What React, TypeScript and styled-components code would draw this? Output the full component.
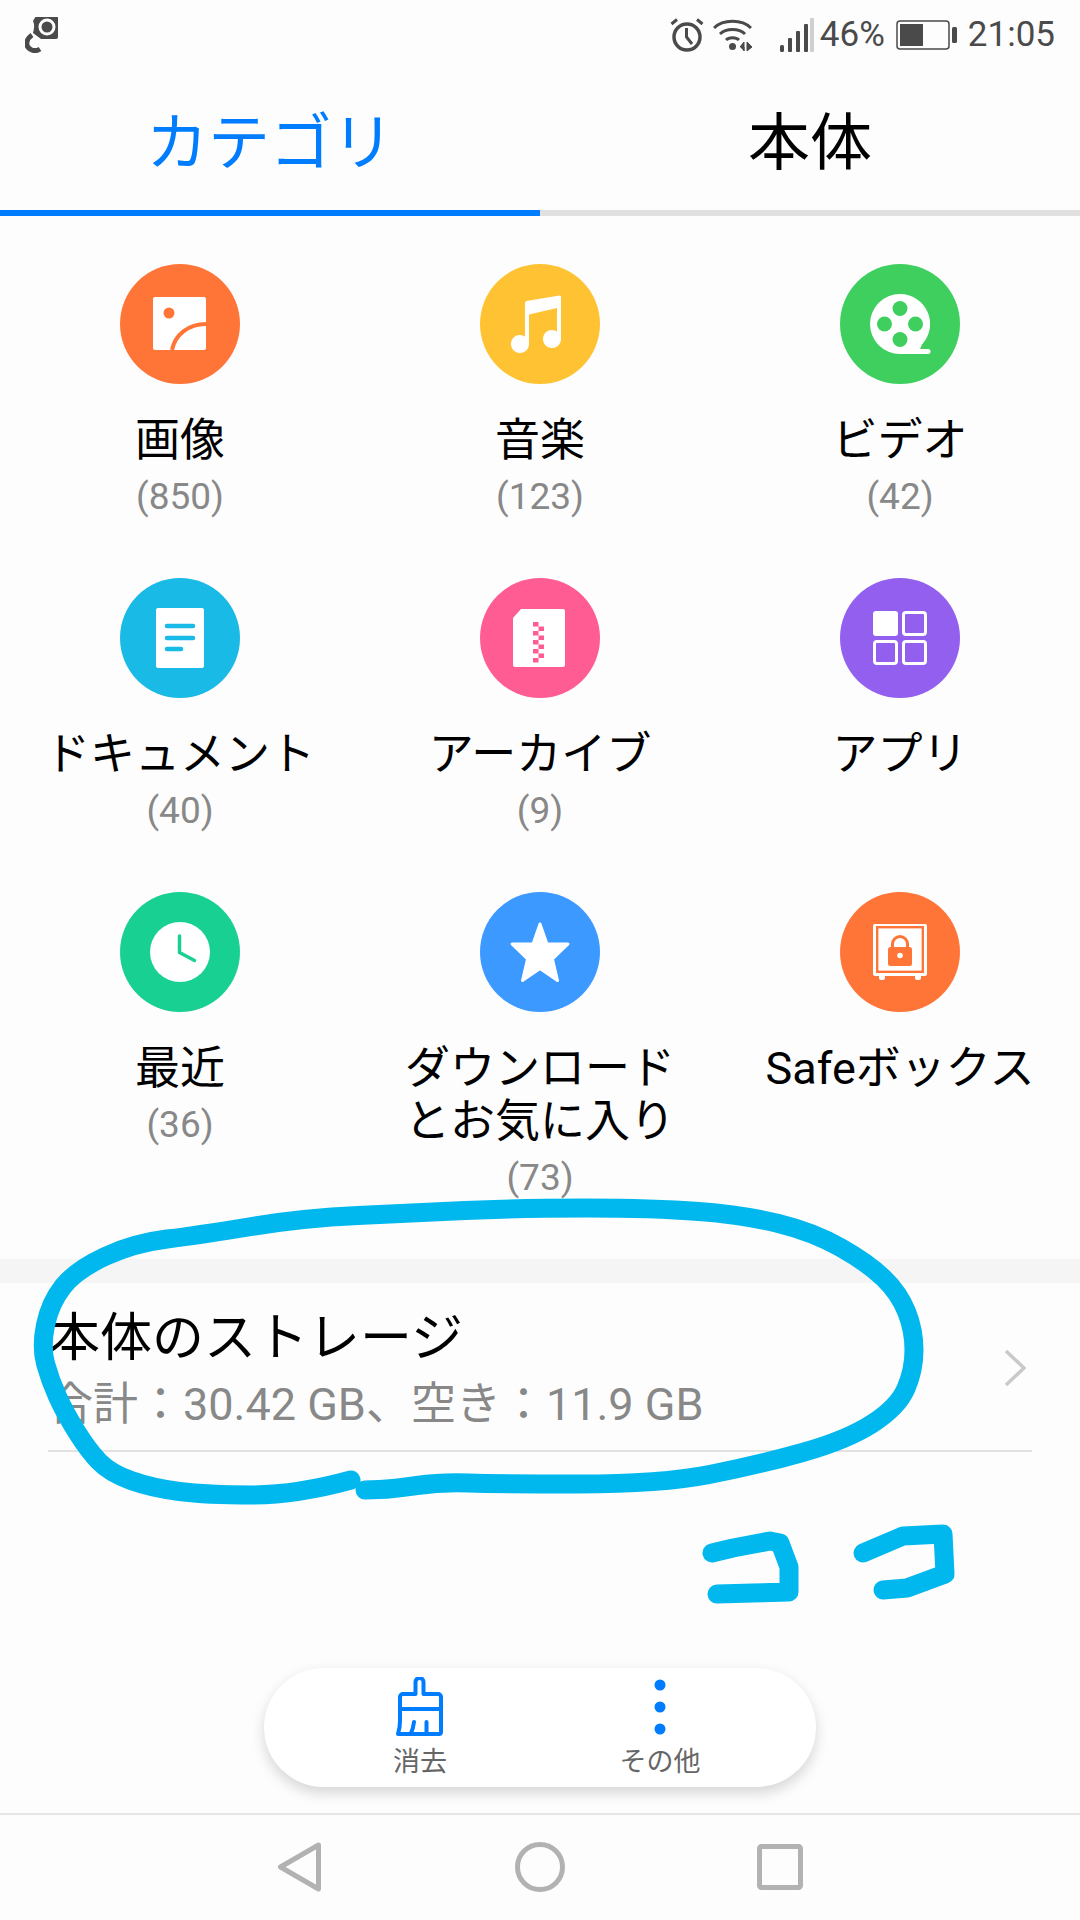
import React from 'react';
import styled, { createGlobalStyle } from 'styled-components';

const BLUE = '#007dff';
const INK = '#4a4a4a';
const FONT = 'Roboto, "Noto Sans CJK JP", sans-serif';

const GlobalStyle = createGlobalStyle`
  html, body {
    margin: 0;
    padding: 0;
    background: #fdfdfd;
  }
  * { box-sizing: border-box; }
`;

const Page = styled.div`
  position: relative;
  width: 1080px;
  height: 1920px;
  display: flex;
  flex-direction: column;
  overflow: hidden;
  background: #fdfdfd;
  font-family: ${FONT};
`;

const StatusBar = styled.header`
  height: 70px;
  display: flex;
  align-items: center;
  padding: 0 25px;
  color: ${INK};
  font-size: 35px;
`;

const StatusRight = styled.div`
  margin-left: auto;
  display: flex;
  align-items: center;
`;

const StatusText = styled.span<{ $gap: number }>`
  margin-left: ${p => p.$gap}px;
  line-height: 70px;
  font-family: Roboto, sans-serif;
`;

const StatusIcon = styled.svg<{ $gap?: number }>`
  display: block;
  margin-left: ${p => p.$gap ?? 0}px;
`;

const Tabs = styled.nav`
  display: flex;
  height: 146px;
`;

const Tab = styled.div<{ $active?: boolean }>`
  flex: 1;
  display: flex;
  align-items: center;
  justify-content: center;
  padding-bottom: 4px;
  font-size: 62px;
  color: ${p => (p.$active ? BLUE : '#000')};
  border-bottom: 6px solid ${p => (p.$active ? BLUE : '#e0e0e0')};
`;

const Grid = styled.section`
  display: grid;
  grid-template-columns: repeat(3, 360px);
  grid-auto-rows: 314px;
  padding-top: 48px;
  height: 990px;
`;

const Cell = styled.div`
  display: flex;
  flex-direction: column;
  align-items: center;
  text-align: center;
`;

const Circle = styled.div<{ $color: string }>`
  width: 120px;
  height: 120px;
  flex: none;
  border-radius: 50%;
  background: ${p => p.$color};
  color: ${p => p.$color};
`;

const CircleArt = styled.svg`
  display: block;
  width: 120px;
  height: 120px;
`;

const Label = styled.div`
  margin-top: 30px;
  font-size: 45px;
  line-height: 53px;
  color: #000;
  white-space: nowrap;
`;

const Count = styled.div`
  margin-top: 6px;
  font-size: 37px;
  line-height: 48px;
  color: #888;
`;

const SectionGap = styled.div`
  margin-top: 53px;
  height: 24px;
  background: #f5f5f5;
`;

const StorageRow = styled.div`
  position: relative;
  height: 169px;
  margin: 0 48px;
  padding-top: 26px;
  display: flex;
  align-items: flex-start;
  justify-content: space-between;
  border-bottom: 2px solid #e2e2e2;
`;

const StorageTitle = styled.div`
  font-size: 52px;
  line-height: 60px;
  color: #000;
`;

const StorageSub = styled.div`
  margin-top: 6px;
  font-size: 45px;
  line-height: 60px;
  color: #888;
`;

const Chevron = styled.svg`
  display: block;
  margin: 40px 6px 0 0;
`;

const Pill = styled.div`
  margin: auto auto 26px;
  width: 552px;
  height: 119px;
  display: grid;
  grid-template-columns: repeat(2, 240px);
  justify-content: center;
  background: #fff;
  border-radius: 60px;
  box-shadow: 0 6px 14px rgba(0, 0, 0, 0.16);
`;

const PillButton = styled.div`
  display: flex;
  flex-direction: column;
  align-items: center;
  padding-top: 9px;
`;

const PillIcon = styled.svg`
  display: block;
  height: 60px;
`;

const PillLabel = styled.div`
  margin-top: 8px;
  font-size: 27px;
  line-height: 34px;
  color: #666;
`;

const NavBar = styled.footer`
  height: 107px;
  padding: 0 180px 2px;
  display: grid;
  grid-template-columns: repeat(3, 240px);
  place-items: center;
  border-top: 2px solid #e6e6e6;
`;

const Scribble = styled.svg`
  position: absolute;
  inset: 0;
  pointer-events: none;
`;

const PhotoIcon = () => (
  <CircleArt viewBox="0 0 120 120">
    <rect x="33" y="33" width="53" height="53" rx="2" fill="#fff" />
    <circle cx="49" cy="49" r="5.500" fill="currentColor" />
    <path d="M52 86C55 71 68 60 86 60" fill="none" stroke="currentColor" strokeWidth="4" />
  </CircleArt>
);

const MusicIcon = () => (
  <CircleArt viewBox="0 0 120 120">
    <path
      d="M45 39a2 2 0 0 1 1.500-2L79.500 31.500a1.500 1.500 0 0 1 1.500 1.500V75a9 9 0 1 1-4-7.500V44L49 50.500V80a9 9 0 1 1-4-7.500Z"
      fill="#fff"
    />
  </CircleArt>
);

const FilmIcon = () => (
  <CircleArt viewBox="0 0 120 120">
    <path d="M60 30a30 30 0 0 1 22 50.500l-2 4.500h8a2.500 2.500 0 0 1 0 5H60a30 30 0 0 1 0-60Z" fill="#fff" />
    <circle cx="60" cy="44.500" r="7.500" fill="currentColor" />
    <circle cx="60" cy="75.500" r="7.500" fill="currentColor" />
    <circle cx="44.500" cy="60" r="7.500" fill="currentColor" />
    <circle cx="75.500" cy="60" r="7.500" fill="currentColor" />
  </CircleArt>
);

const DocIcon = () => (
  <CircleArt viewBox="0 0 120 120">
    <rect x="36" y="30" width="48" height="60" rx="2" fill="#fff" />
    <g stroke="currentColor" strokeWidth="4.500" strokeLinecap="round">
      <path d="M47 48H73" />
      <path d="M47 60H73" />
      <path d="M47 71H61" />
    </g>
  </CircleArt>
);

const ZipIcon = () => (
  <CircleArt viewBox="0 0 120 120">
    <path d="M41 31H83a2 2 0 0 1 2 2V87a2 2 0 0 1-2 2H35a2 2 0 0 1-2-2V40Z" fill="#fff" />
    <path
      d="M53 44h5.500v4.500H64v4.500h-5.500v4.500H64v4.500h-5.500v4.500H64v4.500h-5.500v4.500H64v4.500h-5.500v4.500H53v-4.500h5.500v-4.500H53v-4.500h5.500v-4.500H53v-4.500h5.500v-4.500H53v-4.500h5.500V48.500H53Z"
      fill="currentColor"
    />
  </CircleArt>
);

const AppsIcon = () => (
  <CircleArt viewBox="0 0 120 120">
    <rect x="33" y="33" width="25" height="25" rx="3" fill="#fff" />
    <g fill="none" stroke="#fff" strokeWidth="3">
      <rect x="63.500" y="34.500" width="22" height="22" rx="2.500" />
      <rect x="34.500" y="63.500" width="22" height="22" rx="2.500" />
      <rect x="63.500" y="63.500" width="22" height="22" rx="2.500" />
    </g>
  </CircleArt>
);

const ClockIcon = () => (
  <CircleArt viewBox="0 0 120 120">
    <circle cx="60" cy="60" r="30" fill="#fff" />
    <path d="M59.500 44V60.500L74.500 68.500" fill="none" stroke="currentColor" strokeWidth="3.500" strokeLinecap="round" strokeLinejoin="round" />
  </CircleArt>
);

const StarIcon = () => (
  <CircleArt viewBox="0 0 120 120">
    <path
      d="M60 32L67 52H88L72.500 67L77.500 88.500L60 76.500L42.500 88.500L47.500 67L32 52H53Z"
      fill="#fff"
      stroke="#fff"
      strokeWidth="3"
      strokeLinejoin="round"
    />
  </CircleArt>
);

const SafeIcon = () => (
  <CircleArt viewBox="0 0 120 120">
    <rect x="33" y="32" width="54" height="52" rx="2" fill="#fff" />
    <rect x="39" y="82" width="6" height="6" rx="2" fill="#fff" />
    <rect x="75" y="82" width="6" height="6" rx="2" fill="#fff" />
    <rect x="37.200" y="35.200" width="45.600" height="44.600" fill="none" stroke="currentColor" strokeWidth="2.400" />
    <rect x="48" y="55" width="24" height="19" rx="2.500" fill="currentColor" />
    <path d="M52.500 56V52a7.500 7.500 0 0 1 15 0V56" fill="none" stroke="currentColor" strokeWidth="3" />
    <circle cx="60" cy="63.500" r="2.800" fill="#fff" />
  </CircleArt>
);

type Category = {
  label: React.ReactNode;
  count?: number;
  color: string;
  icon: React.ReactNode;
};

const categories: Category[] = [
  { label: '画像', count: 850, color: '#ff7538', icon: <PhotoIcon /> },
  { label: '音楽', count: 123, color: '#ffc233', icon: <MusicIcon /> },
  { label: 'ビデオ', count: 42, color: '#3fcf5e', icon: <FilmIcon /> },
  { label: 'ドキュメント', count: 40, color: '#19bae5', icon: <DocIcon /> },
  { label: 'アーカイブ', count: 9, color: '#ff5c93', icon: <ZipIcon /> },
  { label: 'アプリ', color: '#925fee', icon: <AppsIcon /> },
  { label: '最近', count: 36, color: '#19d093', icon: <ClockIcon /> },
  {
    label: (
      <>
        ダウンロード
        <br />
        とお気に入り
      </>
    ),
    count: 73,
    color: '#3b99ff',
    icon: <StarIcon />,
  },
  { label: 'Safeボックス', color: '#ff7538', icon: <SafeIcon /> },
];

// marker stroke, rounded through the midpoints of the traced points
const smooth = (pts: number[][]): string => {
  let d = `M${pts[0][0]} ${pts[0][1]}`;
  for (let i = 1; i < pts.length - 1; i++) {
    const mx = (pts[i][0] + pts[i + 1][0]) / 2;
    const my = (pts[i][1] + pts[i + 1][1]) / 2;
    d += `Q${pts[i][0]} ${pts[i][1]} ${mx} ${my}`;
  }
  const last = pts[pts.length - 1];
  return `${d}L${last[0]} ${last[1]}`;
};

const circled = [
  [351, 1480], [296, 1495], [207, 1495], [152, 1488], [110, 1473], [88, 1450], [65, 1413],
  [50, 1380], [41, 1347], [50, 1303], [76, 1270], [134, 1243], [200, 1235], [303, 1218],
  [413, 1213], [517, 1208], [654, 1208], [744, 1215], [813, 1232], [868, 1263], [899, 1293],
  [914, 1330], [914, 1370], [898, 1407], [847, 1440], [758, 1465], [661, 1484], [496, 1484],
  [441, 1482], [393, 1489], [365, 1490],
];

function App() {
  return (
    <Page>
      <GlobalStyle />
      <StatusBar>
        <StatusIcon width="34" height="36" viewBox="0 0 34 36">
          <path d="M11 1H31a2 2 0 0 1 2 2V22a2 2 0 0 1-2 2H16L8 18C9 14 10 10 8 6Z" fill={INK} transform="translate(0 -2)" />
          <circle cx="22" cy="10" r="7" fill="none" stroke="#fff" strokeWidth="3" />
          <path d="M7 18C1 22 0 29 5 32C8 34 12 34 15 32" fill="none" stroke={INK} strokeWidth="5" />
        </StatusIcon>
        <StatusRight>
          <StatusIcon width="34" height="34" viewBox="0 0 34 34">
            <circle cx="17" cy="19" r="13" fill="none" stroke={INK} strokeWidth="3.500" />
            <path d="M16.500 10V19L22 26" fill="none" stroke={INK} strokeWidth="3" />
            <path d="M1.500 6L7 1.500M32.500 6L27 1.500" fill="none" stroke={INK} strokeWidth="3" />
          </StatusIcon>
          <StatusIcon $gap={9} width="39" height="34" viewBox="0 0 39 34">
            <g fill="none" stroke={INK} strokeWidth="3">
              <path d="M1 10C10 1 29 1 38 10" />
              <path d="M7 16C13 10 26 10 32 16" />
              <path d="M13 22C16 19 23 19 26 22" />
            </g>
            <circle cx="19.500" cy="28.500" r="3.500" fill={INK} />
            <path d="M27 29L31 24V33M31 33V29M34 24L39 29L34 33Z" fill={INK} stroke={INK} strokeWidth="1" />
          </StatusIcon>
          <StatusIcon $gap={28} width="34" height="34" viewBox="0 0 34 34">
            <g fill={INK}>
              <rect x="0" y="27" width="4" height="7" rx="1.500" />
              <rect x="8" y="20" width="4" height="14" rx="1" />
              <rect x="16" y="13" width="4" height="21" rx="1" />
              <rect x="24" y="6" width="4" height="28" rx="1" />
            </g>
            <rect x="30" y="0" width="4" height="34" rx="1" fill="#cfcfcf" />
          </StatusIcon>
          <StatusText $gap={6}>46%</StatusText>
          <StatusIcon $gap={11} width="61" height="30" viewBox="0 0 61 30">
            <rect x="1" y="1" width="52" height="28" rx="3" fill="none" stroke={INK} strokeWidth="1.500" />
            <rect x="4" y="4" width="23" height="22" fill={INK} />
            <rect x="56" y="7" width="5" height="16" rx="1.500" fill={INK} />
          </StatusIcon>
          <StatusText $gap={11}>21:05</StatusText>
        </StatusRight>
      </StatusBar>

      <Tabs>
        <Tab $active>カテゴリ</Tab>
        <Tab>本体</Tab>
      </Tabs>

      <Grid>
        {categories.map((c, i) => (
          <Cell key={i}>
            <Circle $color={c.color}>{c.icon}</Circle>
            <Label>{c.label}</Label>
            {c.count !== undefined && <Count>({c.count})</Count>}
          </Cell>
        ))}
      </Grid>

      <SectionGap />

      <StorageRow>
        <div>
          <StorageTitle>本体のストレージ</StorageTitle>
          <StorageSub>合計：30.42 GB、空き：11.9 GB</StorageSub>
        </div>
        <Chevron width="22" height="38" viewBox="0 0 22 38">
          <path d="M2 2L20 19L2 36" fill="none" stroke="#c9c9c9" strokeWidth="3.500" />
        </Chevron>
      </StorageRow>

      <Pill>
        <PillButton>
          <PillIcon width="48" viewBox="0 0 48 60">
            <path
              d="M4 32H45M19.500 17V5a4 4 0 0 1 8 0V17H42a3 3 0 0 1 3 3V55a2 2 0 0 1-2 2H2C3.500 52 4 48 4 44V20a3 3 0 0 1 3-3ZM15 56C17 52 17.500 49 18 45M30.500 56V45"
              fill="none"
              stroke={BLUE}
              strokeWidth="4"
              strokeLinejoin="round"
              strokeLinecap="round"
            />
          </PillIcon>
          <PillLabel>消去</PillLabel>
        </PillButton>
        <PillButton>
          <PillIcon width="12" viewBox="0 0 12 60">
            <circle cx="6" cy="8" r="5.500" fill={BLUE} />
            <circle cx="6" cy="30" r="5.500" fill={BLUE} />
            <circle cx="6" cy="52" r="5.500" fill={BLUE} />
          </PillIcon>
          <PillLabel>その他</PillLabel>
        </PillButton>
      </Pill>

      <NavBar>
        <svg width="44" height="50" viewBox="0 0 44 50">
          <path d="M40.500 3L2.500 25L40.500 47Z" fill="none" stroke="#b2b2b2" strokeWidth="5" strokeLinejoin="round" />
        </svg>
        <svg width="50" height="50" viewBox="0 0 50 50">
          <circle cx="25" cy="25" r="22.500" fill="none" stroke="#b2b2b2" strokeWidth="5" />
        </svg>
        <svg width="46" height="46" viewBox="0 0 46 46">
          <rect x="2.500" y="2.500" width="41" height="41" rx="2" fill="none" stroke="#b2b2b2" strokeWidth="5" />
        </svg>
      </NavBar>

      {/* hand-drawn marker on top of the screenshot */}
      <Scribble width="1080" height="1920" viewBox="0 0 1080 1920">
        <g fill="none" stroke="#00b8ee" strokeWidth="19" strokeLinecap="round" strokeLinejoin="round">
          <path d={smooth(circled)} />
          <path d="M712 1553L733 1548L770 1541L780 1543L789 1567L789 1592L753 1593L717 1594" />
          <path d="M863 1553L903 1536L943 1534L945 1574L907 1588L883 1590" />
        </g>
      </Scribble>
    </Page>
  );
}

export default App;
